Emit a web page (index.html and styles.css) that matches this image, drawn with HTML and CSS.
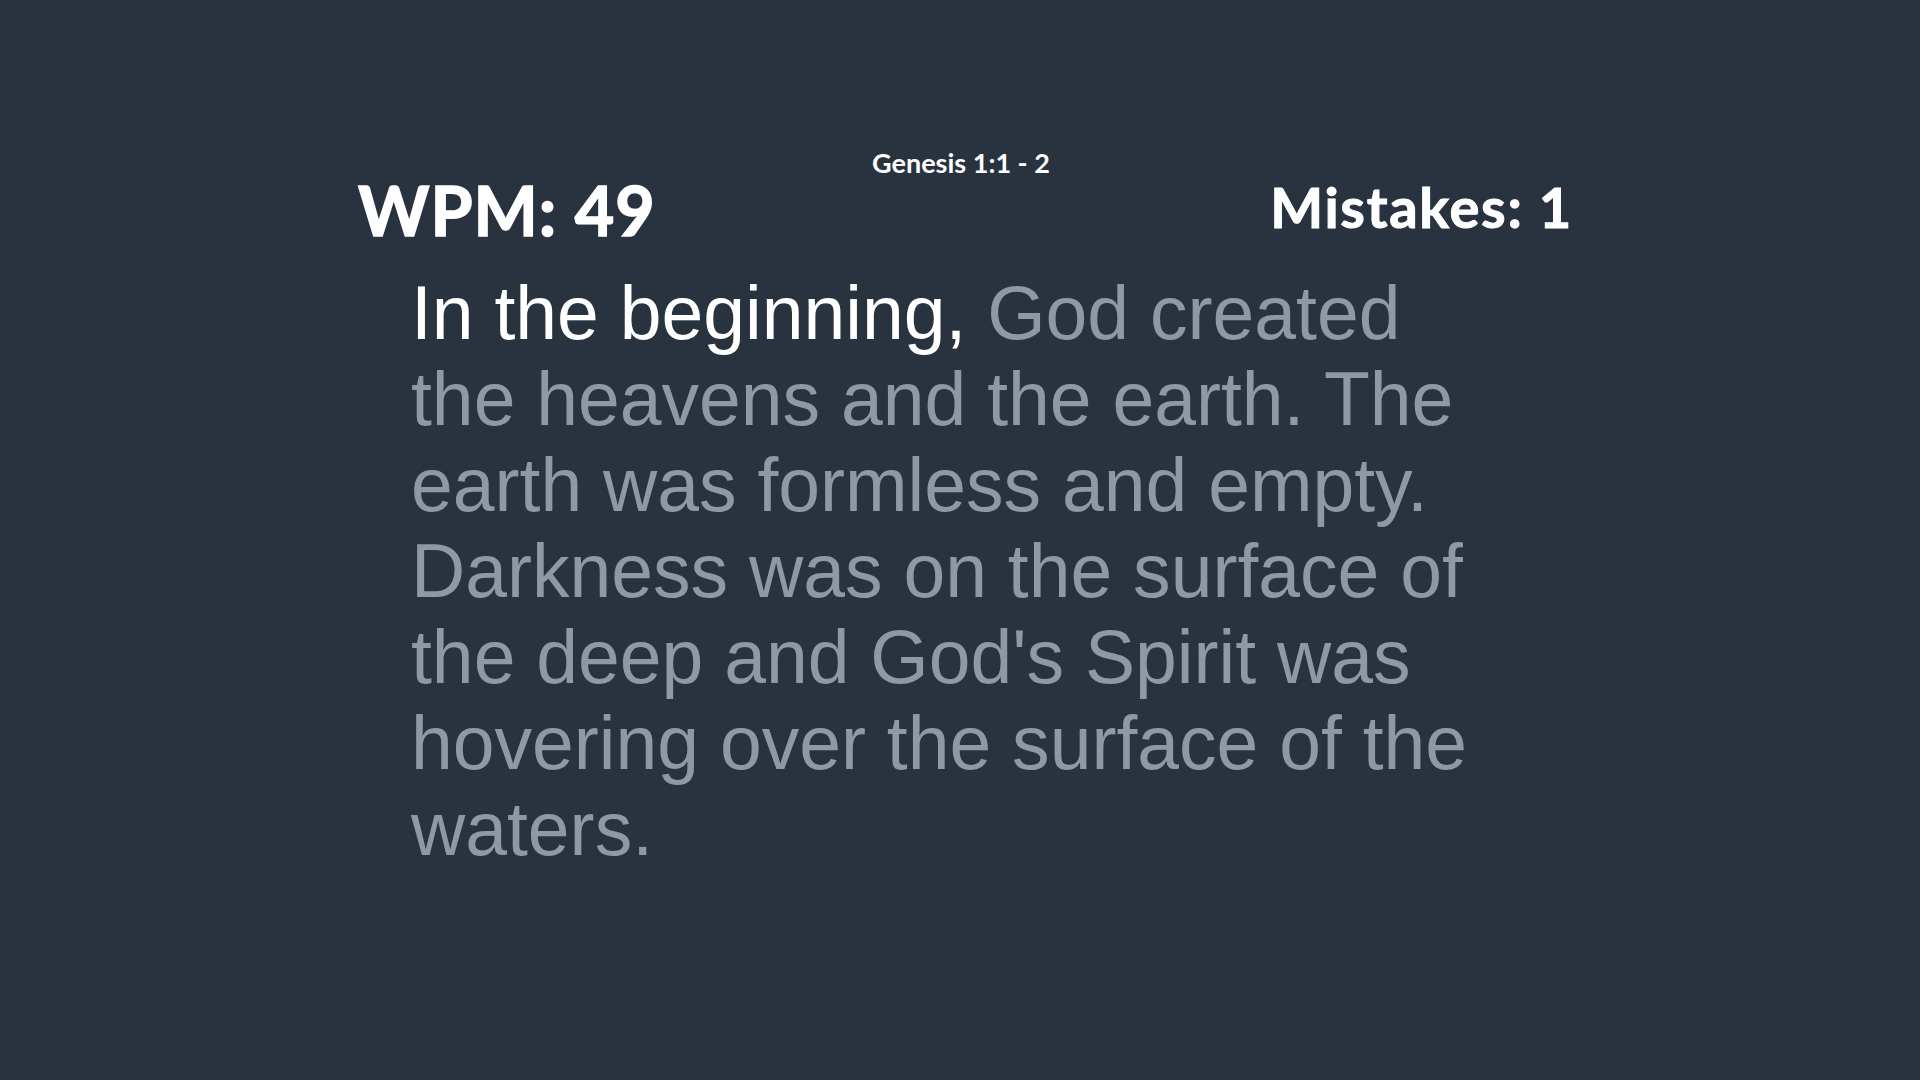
FILE: index.html
```html
<!DOCTYPE html>
<html lang="en">
<head>
    <meta charset="UTF-8">
    <meta name="viewport" content="width=device-width, initial-scale=1.0">
    <title>Typing Test</title>
    <link rel="stylesheet" href="styles.css">
</head>
<body>
    <main class="container">
        <header class="top-row">
            <div class="stat stat-wpm">WPM: 49</div>
            <div class="reference">Genesis 1:1 - 2</div>
            <div class="stat stat-mistakes">Mistakes: 1</div>
        </header>
        <p class="passage"><span class="typed">In the beginning,</span> God created the heavens and the earth. The earth was formless and empty. Darkness was on the surface of the deep and God's Spirit was hovering over the surface of the waters.</p>
    </main>
</body>
</html>
```

FILE: styles.css
```css
body {
    margin: 0;
    min-height: 1080px;
    background-color: #28333f;
    box-sizing: border-box;
    padding-top: 146px;
    overflow: hidden;
}
.container {
    width: 1226px;
    margin: 0 auto;
}
.top-row {
    display: grid;
    grid-template-columns: 1fr auto 1fr;
    align-items: start;
    color: #fff;
    font-family: Lato, "Open Sans", sans-serif;
    font-weight: 700;
}
.stat {
    line-height: 60px;
}
.stat-wpm {
    margin-top: 34px;
    padding-left: 11px;
    font-size: 68px;
    -webkit-text-stroke: 1.5px #fff;
    letter-spacing: 1px;
}
.stat-mistakes {
    margin-top: 31px;
    font-size: 56px;
    text-align: right;
    -webkit-text-stroke: 1px #fff;
    letter-spacing: 1.7px;
}
.reference {
    margin-left: 2px;
    font-size: 27px;
    line-height: 34px;
}
.passage {
    margin: 30px 0 0;
    padding: 0 70px 0 64px;
    font-family: "Liberation Sans", Arial, sans-serif;
    font-size: 75.1px;
    line-height: 86px;
    color: #9298a1;
}
.typed {
    color: #fff;
}
```
